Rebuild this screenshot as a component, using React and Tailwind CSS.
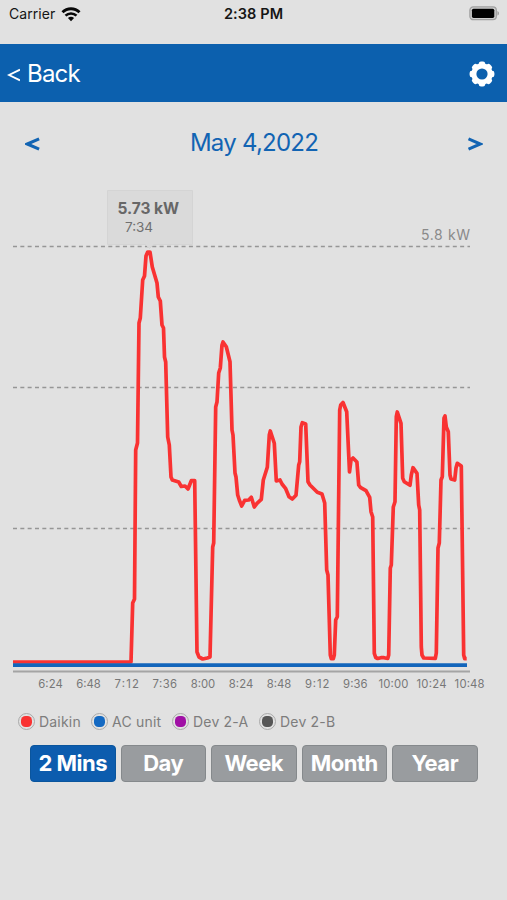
import { useState } from 'react';
import clsx from 'clsx';

const RED = '#f93232';

const gridLines = [246.5, 387.5, 528.5];

const timeTicks = ['6:24', '6:48', '7:12', '7:36', '8:00', '8:24', '8:48', '9:12', '9:36', '10:00', '10:24', '10:48'];

// Daikin power curve, already scaled to chart units
const daikinPoints = [
  [13, 662], [131, 662], [132.7, 603], [134.5, 599], [135.7, 450], [137.5, 443], [139, 323], [140.3, 318],
  [142.7, 280], [144.5, 276], [146, 256], [147.7, 252], [150, 252], [152.3, 267], [157, 283], [158.3, 297],
  [160.3, 301], [162, 325], [163.5, 328], [164.5, 357], [165.7, 362], [167.7, 437], [169.3, 445], [171, 477],
  [172.3, 480], [178.7, 482], [181.3, 486.5], [185, 486], [188, 489], [191.3, 480.7], [194.7, 480.7],
  [197, 652], [199, 657], [202.7, 659], [207.3, 658], [210, 657], [212.7, 547], [213.7, 543], [215.7, 407],
  [217, 402], [218.7, 373], [220.3, 368], [222, 345], [223, 342], [226.3, 346.7], [230, 361.7], [232, 430],
  [233, 435], [235, 473], [236, 477], [237.7, 495], [239.3, 500], [241.7, 506], [244.7, 500.3], [248.7, 500],
  [251.3, 497.3], [254.3, 507], [257, 503.3], [261.3, 499.3], [263.3, 480], [267.3, 467.3], [269.3, 435],
  [270.3, 431], [274.3, 443.3], [276.3, 481], [280, 480], [282, 484], [285.7, 488.7], [289, 496.7],
  [292.3, 499], [296, 495.3], [298.7, 465], [299.7, 461.7], [301, 427], [302.3, 422.7], [305.7, 424],
  [308, 481.7], [310, 485], [317.3, 492.3], [322, 494], [324.7, 503], [326.7, 570], [328, 575], [330.3, 655],
  [331.3, 658.7], [333.3, 658.7], [334.3, 655], [335.7, 620], [337.3, 616.7], [339.7, 410], [340.7, 405],
  [343, 402.5], [346.7, 411.7], [349.5, 472], [351, 460], [353, 458], [356.9, 462], [358.7, 485],
  [360.3, 487.3], [366, 490.7], [369.7, 497.3], [371, 511.7], [372.7, 517], [374.3, 653.3], [375.7, 657.5],
  [377.7, 658.5], [381, 657.7], [384, 657.7], [387.7, 658.5], [388.7, 655], [390.3, 568], [391.3, 565],
  [393.3, 507], [395, 501.7], [396.3, 416.7], [397.3, 412], [401, 423.3], [402.7, 478.3], [404.3, 481.7],
  [410, 485.3], [411.3, 475], [413, 467.7], [417, 473.3], [418.7, 505], [419.7, 510], [421.3, 647],
  [422, 655], [423.7, 658], [435.3, 658.3], [436.3, 653], [438, 548], [439.3, 543], [441, 480],
  [442.3, 476.7], [444, 418], [445, 416], [446.3, 427], [448.3, 431.7], [450, 475], [451, 479],
  [454.7, 480], [456, 468], [457.3, 463.3], [461.3, 466], [463.7, 655], [464.7, 658.7], [466.7, 658.7],
];

const devices = [
  { name: 'Daikin', dot: 'bg-[#f93232]', width: 'w-[73px]' },
  { name: 'AC unit', dot: 'bg-[#1469c2]', width: 'w-[81px]' },
  { name: 'Dev 2-A', dot: 'bg-[#a010a5]', width: 'w-[87px]' },
  { name: 'Dev 2-B', dot: 'bg-[#565656]', width: 'w-[87px]' },
];

const ranges = ['2 Mins', 'Day', 'Week', 'Month', 'Year'];

const WifiIcon = () => (
  <svg width="20" height="15" viewBox="0 0 20 15" fill="none" stroke="#080808">
    <path d="M1.5 5.3a12 12 0 0 1 17 0" strokeWidth="2.9" />
    <path d="M4.5 8.7a7.8 7.8 0 0 1 11 0" strokeWidth="2.6" />
    <path d="M10 14.2 6.9 11.1a4.6 4.6 0 0 1 6.2 0Z" fill="#080808" stroke="none" />
  </svg>
);

const BatteryIcon = () => (
  <svg width="31" height="15" viewBox="0 0 31 15">
    <rect x="0.9" y="0.9" width="26.4" height="12.8" rx="3.4" fill="#cecece" stroke="#a0a0a0" strokeWidth="1.3" />
    <rect x="2.9" y="2.7" width="22.4" height="9.2" rx="1.6" fill="#000" />
    <path d="M28.4 5v4.6c2.2-.8 2.2-3.8 0-4.6Z" fill="#a0a0a0" />
  </svg>
);

const GearIcon = () => (
  <svg width="26" height="26" viewBox="-13 -13 26 26">
    {[0, 45, 90, 135].map((angle) => (
      <rect key={angle} x="-3.2" y="-12.4" width="6.4" height="24.8" rx="2.2" fill="#fff" transform={`rotate(${angle})`} />
    ))}
    <circle r="10.7" fill="#fff" />
    <circle r="5.6" fill="#0c60ae" />
  </svg>
);

const StatusBar = () => (
  <div className="grid h-[43.5px] grid-cols-3 px-[9px] pt-[6px] text-[#151515]">
    <div className="flex h-4 items-center gap-[6px]">
      <span className="text-[14px] leading-4 tracking-[0.05px]">Carrier</span>
      <WifiIcon />
    </div>
    <div className="h-4 text-center text-[14.5px] leading-4 font-semibold tracking-[0.1px]">2:38 PM</div>
    <div className="-mr-[2px] flex h-[15px] justify-end">
      <BatteryIcon />
    </div>
  </div>
);

const PowerChart = () => (
  <svg className="block h-[510px] w-[507px]" viewBox="0 185 507 510">
    {gridLines.map((y) => (
      <line key={y} x1="13" x2="470" y1={y} y2={y} stroke="#969696" strokeWidth="1.5" strokeDasharray="4 3.33" />
    ))}

    {/* Tooltip over the selected reading */}
    <path d="M107.5 190.5h85v54h-39l-4 4-4-4h-38Z" fill="#dadada" stroke="#d4d4d4" strokeWidth="1" />
    <text x="117.5" y="213.5" fontSize="15.5" fontWeight="700" fill="#676767" textLength="61.5">5.73 kW</text>
    <text x="125" y="232" fontSize="13.5" fill="#707070" textLength="28">7:34</text>
    <text x="421" y="240.3" fontSize="14" fill="#8a8a8a" textLength="49">5.8 kW</text>

    <line x1="13" x2="470" y1="671.5" y2="671.5" stroke="#a4a4a4" strokeWidth="1.8" />
    <polyline
      points={daikinPoints.map((p) => p.join(',')).join(' ')}
      fill="none"
      stroke={RED}
      strokeWidth="3.7"
      strokeLinejoin="round"
    />
    <line x1="13" x2="467" y1="665.2" y2="665.2" stroke="#1265bb" strokeWidth="3.7" />

    {timeTicks.map((tick, i) => (
      <text
        key={tick}
        x={50.5 + i * 38.1}
        y="687.7"
        textAnchor="middle"
        fontSize="11.3"
        fill="#777777"
        textLength={tick.length > 4 ? 30 : 24.5}
      >
        {tick}
      </text>
    ))}
  </svg>
);

const App = () => {
  const [activeRange, setActiveRange] = useState('2 Mins');

  return (
    <div className="h-[900px] w-[507px] overflow-hidden bg-[#e1e1e1] font-['Inter','Liberation_Sans',sans-serif]">
      <StatusBar />

      <header className="flex h-[58.5px] items-center justify-between bg-[#0c60ae] pt-[2px] pr-[12px] pl-[7px] text-white">
        <button className="flex items-center text-[24px] tracking-[-0.8px]">
          <svg className="mt-[2px] mr-[7px]" width="13" height="14" viewBox="0 0 13 14" fill="none" stroke="#fff" strokeWidth="1.9">
            <path d="M13 1.7 2 7l11 5.3" />
          </svg>
          Back
        </button>
        <button>
          <GearIcon />
        </button>
      </header>

      <div className="flex h-[83px] items-center justify-between pr-[24px] pl-[25px] text-[#1264b3]">
        <button>
          <svg width="15" height="14" viewBox="0 0 15 14" fill="none" stroke="currentColor" strokeWidth="3.1">
            <path d="M14.1 1.9 2.3 7l11.8 5.1" />
          </svg>
        </button>
        <span className="-mt-[2px] text-[24px] leading-[30px] tracking-[-0.75px]">May 4,2022</span>
        <button>
          <svg width="15" height="14" viewBox="0 0 15 14" fill="none" stroke="currentColor" strokeWidth="3.1">
            <path d="M.5 1.9l11.8 5.1L.5 12.1" />
          </svg>
        </button>
      </div>

      <PowerChart />

      {/* Device legend */}
      <div className="mt-[17px] flex h-[18px] items-center pl-[18px] text-[14px] tracking-[0.2px] text-[#7d7d7d]">
        {devices.map((d) => (
          <div key={d.name} className={clsx('flex items-center gap-1 whitespace-nowrap', d.width)}>
            <span className="flex size-[17px] shrink-0 items-center justify-center rounded-full border border-[#aaaaaa]">
              <span className={clsx('size-[11px] rounded-[4.5px]', d.dot)} />
            </span>
            {d.name}
          </div>
        ))}
      </div>

      <div className="mt-[14.5px] flex gap-[5px] pl-[30px]">
        {ranges.map((range) => (
          <button
            key={range}
            onClick={() => setActiveRange(range)}
            className={clsx(
              'h-[37px] w-[85.5px] rounded-[4px] border text-center text-[22px] leading-none font-bold tracking-[-0.5px] whitespace-nowrap text-white',
              activeRange === range ? 'border-[#0a559d] bg-[#0c5cae]' : 'border-[#85898c] bg-[#999c9f]'
            )}
          >
            {range}
          </button>
        ))}
      </div>
    </div>
  );
};

export default App;
